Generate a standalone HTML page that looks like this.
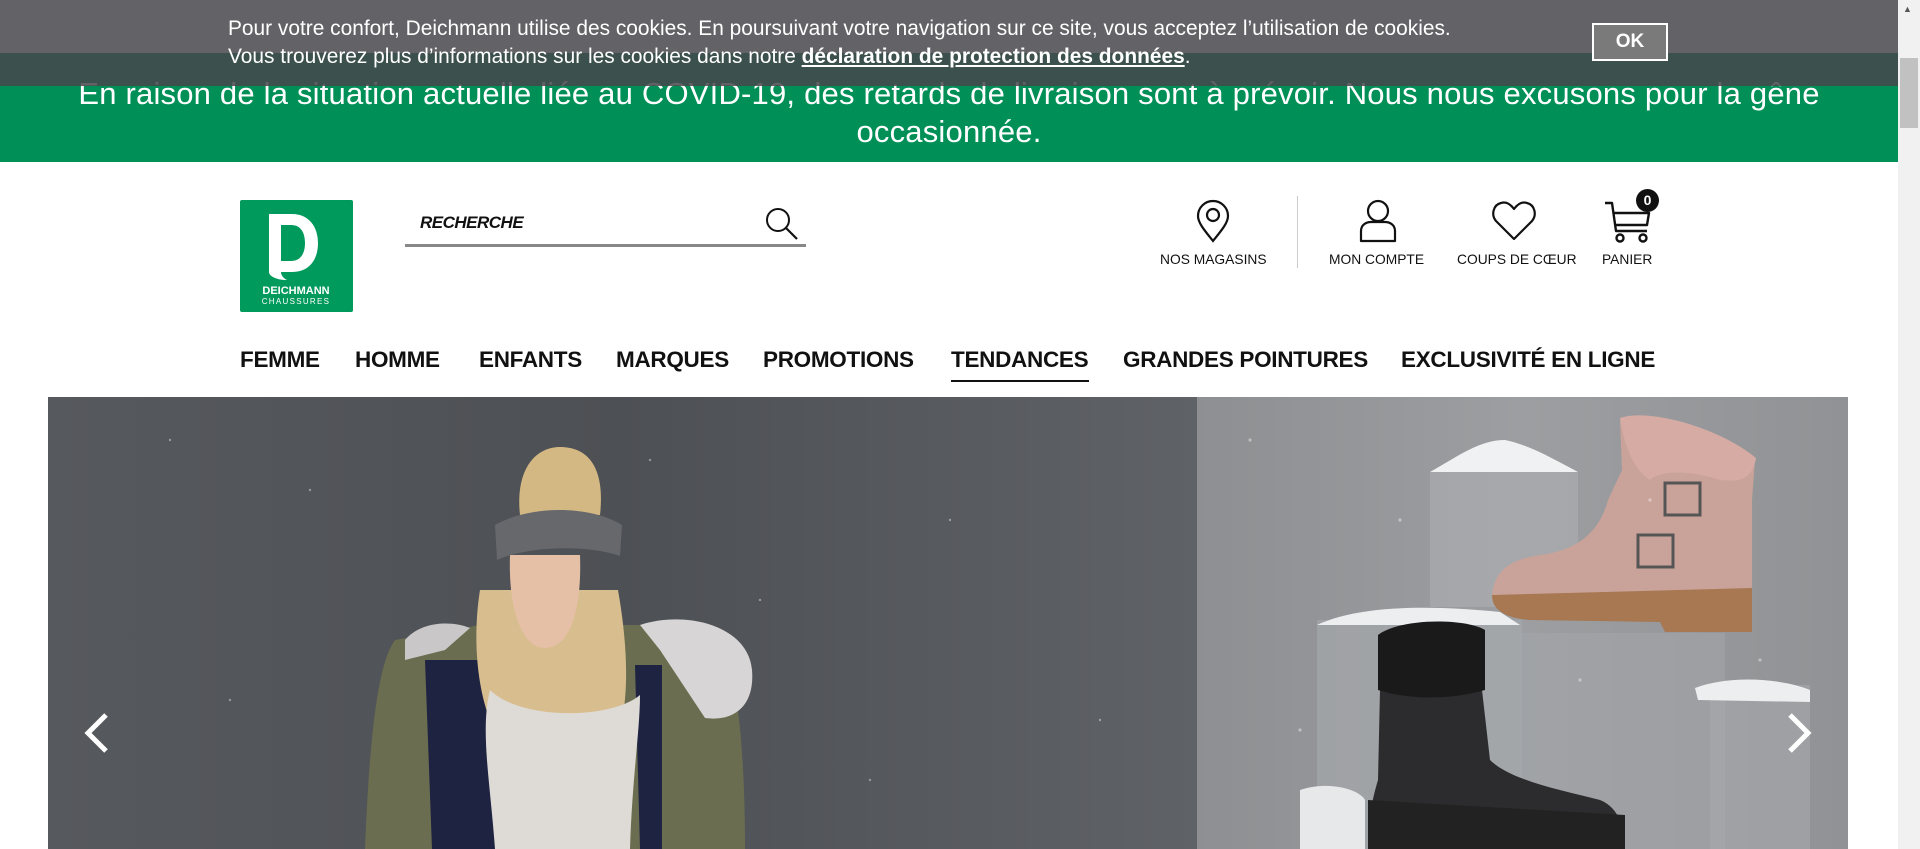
<!DOCTYPE html>
<html><head><meta charset="utf-8"><style>
*{margin:0;padding:0;box-sizing:border-box}
html,body{width:1920px;height:849px;overflow:hidden;background:#fff;font-family:"Liberation Sans",Arial,sans-serif}
.abs{position:absolute}
.promo{left:0;top:0;width:1898px;height:53px;background:#f2f2f2}
.green{left:0;top:53px;width:1898px;height:109px;background:#009057;color:#fff;font-size:31px;text-align:center;line-height:38px;padding-top:22px;letter-spacing:0.2px;white-space:nowrap}
.ov1{left:0;top:0;width:1898px;height:53px;background:#626267}
.ov2{left:0;top:53px;width:1898px;height:33px;background:rgba(70,70,75,0.85)}
.ck{left:228px;top:15px;color:#fff;font-size:20.9px;line-height:28px;white-space:nowrap}
.ck b{text-decoration:underline}
.ok{left:1592px;top:23px;width:76px;height:38px;background:#7a7a7a;border:2px solid #fff;color:#fff;font-weight:bold;font-size:19px;text-align:center;line-height:34px}
.sb{left:1898px;top:0;width:22px;height:849px;background:#f1f1f1}
.sbt{left:1900px;top:58px;width:18px;height:70px;background:#c1c1c1}
.lbl{font-size:13.8px;color:#111;top:252px;white-space:nowrap}
.nav{top:347px;font-size:22.5px;font-weight:bold;color:#111;white-space:nowrap;letter-spacing:-0.3px}
</style></head><body>
<div class="abs promo"></div>
<div class="abs green">En raison de la situation actuelle liée au COVID-19, des retards de livraison sont à prévoir. Nous nous excusons pour la gêne<br>occasionnée.</div>
<div class="abs ov1"></div>
<div class="abs ov2"></div>
<div class="abs ck">Pour votre confort, Deichmann utilise des cookies. En poursuivant votre navigation sur ce site, vous acceptez l’utilisation de cookies.<br>Vous trouverez plus d’informations sur les cookies dans notre <b>déclaration de protection des données</b>.</div>
<div class="abs ok">OK</div>
<div class="abs sb"></div><div class="abs sbt"></div>
<div class="abs" style="left:1903px;top:4px;font-size:9px;color:#555">▲</div>

<!-- logo -->
<div class="abs" style="left:240px;top:200px;width:113px;height:112px;background:#009a5c;border-radius:2px"></div>
<svg class="abs" style="left:240px;top:200px" width="113" height="112" viewBox="0 0 113 112">
<path d="M29 14 H52 C69 14 78 27 78 43 C78 60 69 72 52 72 H41 C41 75 43 78 47 80 C36 80 29 76 29 72 Z M41 25 V61 H51 C61 61 65 53 65 43 C65 33 61 25 51 25 Z" fill="#fff" fill-rule="evenodd"/>
<text x="56" y="94" font-family="Liberation Sans" font-weight="bold" font-size="11" fill="#fff" text-anchor="middle">DEICHMANN</text>
<text x="56" y="104" font-family="Liberation Sans" font-size="8" letter-spacing="1.3" fill="#fff" text-anchor="middle">CHAUSSURES</text>
</svg>

<!-- search -->
<div class="abs" style="left:420px;top:213px;font-size:17px;font-style:italic;font-weight:bold;color:#111;letter-spacing:-0.5px">RECHERCHE</div>
<div class="abs" style="left:405px;top:244px;width:401px;height:3px;background:#888"></div>
<svg class="abs" style="left:764px;top:206px" width="36" height="36" viewBox="0 0 36 36"><circle cx="14" cy="14" r="11" fill="none" stroke="#111" stroke-width="2"/><path d="M22 22 L33 33" stroke="#111" stroke-width="2.2"/></svg>

<!-- icons -->
<svg class="abs" style="left:1195px;top:199px" width="36" height="44" viewBox="0 0 36 44"><path d="M18 42 C10 32 3 24 3 17 A15 15 0 0 1 33 17 C33 24 26 32 18 42 Z" fill="none" stroke="#111" stroke-width="2.2"/><circle cx="18" cy="16" r="6" fill="none" stroke="#111" stroke-width="2.2"/></svg>
<div class="abs lbl" style="left:1160px">NOS MAGASINS</div>
<div class="abs" style="left:1297px;top:196px;width:1px;height:72px;background:#ccc"></div>
<svg class="abs" style="left:1357px;top:199px" width="42" height="44" viewBox="0 0 42 44"><circle cx="21" cy="12" r="10" fill="none" stroke="#111" stroke-width="2.2"/><path d="M4 42 V32 C4 26 9 23 14 23 H28 C33 23 38 26 38 32 V42 Z" fill="none" stroke="#111" stroke-width="2.2" stroke-linejoin="round"/></svg>
<div class="abs lbl" style="left:1329px">MON COMPTE</div>
<svg class="abs" style="left:1491px;top:200px" width="46" height="42" viewBox="0 0 46 42"><path d="M23 39 L5 21 C0 15 2 5 10 3 C16 1 20 5 23 9 C26 5 30 1 36 3 C44 5 46 15 41 21 Z" fill="none" stroke="#111" stroke-width="2.2" stroke-linejoin="round"/></svg>
<div class="abs lbl" style="left:1457px">COUPS DE CŒUR</div>
<svg class="abs" style="left:1603px;top:199px" width="50" height="46" viewBox="0 0 50 46"><path d="M2 4 H9 L13 32 H44 M11 14 H46 L44 26 H12" fill="none" stroke="#111" stroke-width="2.4" stroke-linejoin="round"/><circle cx="17" cy="39" r="3.5" fill="none" stroke="#111" stroke-width="2.4"/><circle cx="40" cy="39" r="3.5" fill="none" stroke="#111" stroke-width="2.4"/></svg>
<div class="abs" style="left:1636px;top:189px;width:23px;height:23px;border-radius:50%;background:#111;color:#fff;font-size:14px;font-weight:bold;text-align:center;line-height:23px">0</div>
<div class="abs lbl" style="left:1602px">PANIER</div>

<!-- nav -->
<div class="abs nav" style="left:240px">FEMME</div>
<div class="abs nav" style="left:355px">HOMME</div>
<div class="abs nav" style="left:479px">ENFANTS</div>
<div class="abs nav" style="left:616px">MARQUES</div>
<div class="abs nav" style="left:763px">PROMOTIONS</div>
<div class="abs nav" style="left:951px">TENDANCES</div>
<div class="abs" style="left:951px;top:380px;width:138px;height:2px;background:#111"></div>
<div class="abs nav" style="left:1123px">GRANDES POINTURES</div>
<div class="abs nav" style="left:1401px">EXCLUSIVITÉ EN LIGNE</div>

<!-- hero -->
<svg class="abs" style="left:48px;top:397px" width="1800" height="452" viewBox="48 397 1800 452">
<defs>
<linearGradient id="lg" x1="0" x2="1"><stop offset="0" stop-color="#56595d"/><stop offset="0.5" stop-color="#4d5054"/><stop offset="1" stop-color="#5f6266"/></linearGradient>
<linearGradient id="rg" x1="0" x2="1"><stop offset="0" stop-color="#8d8f92"/><stop offset="0.5" stop-color="#9c9ea1"/><stop offset="1" stop-color="#909295"/></linearGradient>
</defs>
<rect x="48" y="397" width="1149" height="452" fill="url(#lg)"/>
<rect x="1197" y="397" width="651" height="452" fill="url(#rg)"/>
<!-- woman -->
<path d="M395 640 C380 660 370 720 365 849 L745 849 C745 770 740 720 735 690 L700 640 L640 625 L480 625 Z" fill="#6b6d50"/>
<path d="M425 660 L500 660 L500 849 L432 849 Z" fill="#1e2342"/>
<path d="M635 665 L662 665 L662 849 L640 849 Z" fill="#1e2342"/>
<path d="M480 590 C472 640 478 690 490 720 L622 720 C630 680 625 630 618 590 Z" fill="#d8be8e"/>
<path d="M490 690 C480 730 490 780 495 849 L630 849 C632 780 640 730 640 695 C610 720 520 720 490 690 Z" fill="#dedbd6"/>
<path d="M520 515 C515 470 535 447 560 447 C590 447 605 470 600 515 Z" fill="#d4b883"/>
<path d="M510 555 C508 610 522 648 545 648 C570 648 582 610 580 555 Z" fill="#e5bfa6"/>
<path d="M495 525 C530 505 590 505 622 525 L620 556 C590 545 530 545 497 560 Z" fill="#66686c"/>
<path d="M640 625 C685 610 748 625 752 670 C755 705 735 722 705 718 L660 650 Z" fill="#d7d5d5"/>
<path d="M405 640 C420 622 450 620 470 628 L445 650 L405 660 Z" fill="#c9c7c7"/>
<!-- pedestals -->
<rect x="1430" y="472" width="148" height="135" fill="#aeb1b4" opacity="0.55"/>
<path d="M1430 472 C1460 455 1480 440 1505 440 C1530 445 1555 460 1578 472 Z" fill="#f0f1f2"/>
<rect x="1317" y="620" width="205" height="229" fill="#aaadb0" opacity="0.55"/>
<path d="M1317 625 C1360 605 1430 605 1500 612 L1520 625 Z" fill="#eceef0"/>
<rect x="1520" y="633" width="205" height="216" fill="#a6a9ac" opacity="0.45"/>
<rect x="1710" y="685" width="100" height="164" fill="#a9acaf" opacity="0.5"/>
<path d="M1695 688 C1730 675 1780 678 1810 690 L1810 702 L1698 700 Z" fill="#eceef0"/>
<path d="M1300 790 C1330 780 1360 790 1365 800 L1365 849 L1300 849 Z" fill="#e6e8ea"/>
<!-- pink boot -->
<path d="M1620 420 C1650 410 1720 430 1755 460 L1752 500 L1752 590 L1492 600 C1492 575 1505 560 1540 555 C1580 550 1600 530 1608 500 L1622 470 Z" fill="#c9a29a"/>
<path d="M1620 418 C1650 408 1720 428 1756 458 C1752 480 1740 482 1720 480 C1690 470 1660 470 1650 480 C1635 470 1625 450 1620 418 Z" fill="#d6aba4"/>
<path d="M1492 595 L1752 588 L1752 632 L1665 632 L1660 622 L1530 620 C1505 618 1492 610 1492 595 Z" fill="#a77851"/>
<rect x="1665" y="483" width="35" height="32" fill="none" stroke="#555" stroke-width="3"/>
<rect x="1638" y="535" width="35" height="32" fill="none" stroke="#555" stroke-width="3"/>
<!-- black boot -->
<path d="M1380 690 L1482 690 L1490 760 C1510 780 1560 790 1600 800 C1620 808 1625 830 1625 849 L1368 849 C1368 820 1372 800 1378 780 Z" fill="#2c2c2e"/>
<path d="M1378 635 C1400 618 1465 618 1485 630 L1485 690 C1450 700 1410 700 1378 690 Z" fill="#1a1a1b"/>
<path d="M1368 800 L1625 815 L1625 849 L1368 849 Z" fill="#222"/>
<g fill="#fff" opacity="0.4">
<circle cx="170" cy="440" r="1.2"/><circle cx="310" cy="490" r="1.2"/><circle cx="650" cy="460" r="1.2"/><circle cx="760" cy="600" r="1.2"/><circle cx="950" cy="520" r="1.2"/><circle cx="1100" cy="720" r="1.2"/><circle cx="230" cy="700" r="1.2"/><circle cx="870" cy="780" r="1.2"/><circle cx="1300" cy="730" r="1.6"/><circle cx="1650" cy="500" r="1.6"/><circle cx="1760" cy="660" r="1.6"/><circle cx="1250" cy="440" r="1.6"/><circle cx="1400" cy="520" r="1.6"/><circle cx="1580" cy="680" r="1.6"/>
</g>
<path d="M106 715 L88 733 L106 751" fill="none" stroke="#fff" stroke-width="5"/>
<path d="M1790 715 L1808 733 L1790 751" fill="none" stroke="#fff" stroke-width="5"/>
</svg>
</body></html>
